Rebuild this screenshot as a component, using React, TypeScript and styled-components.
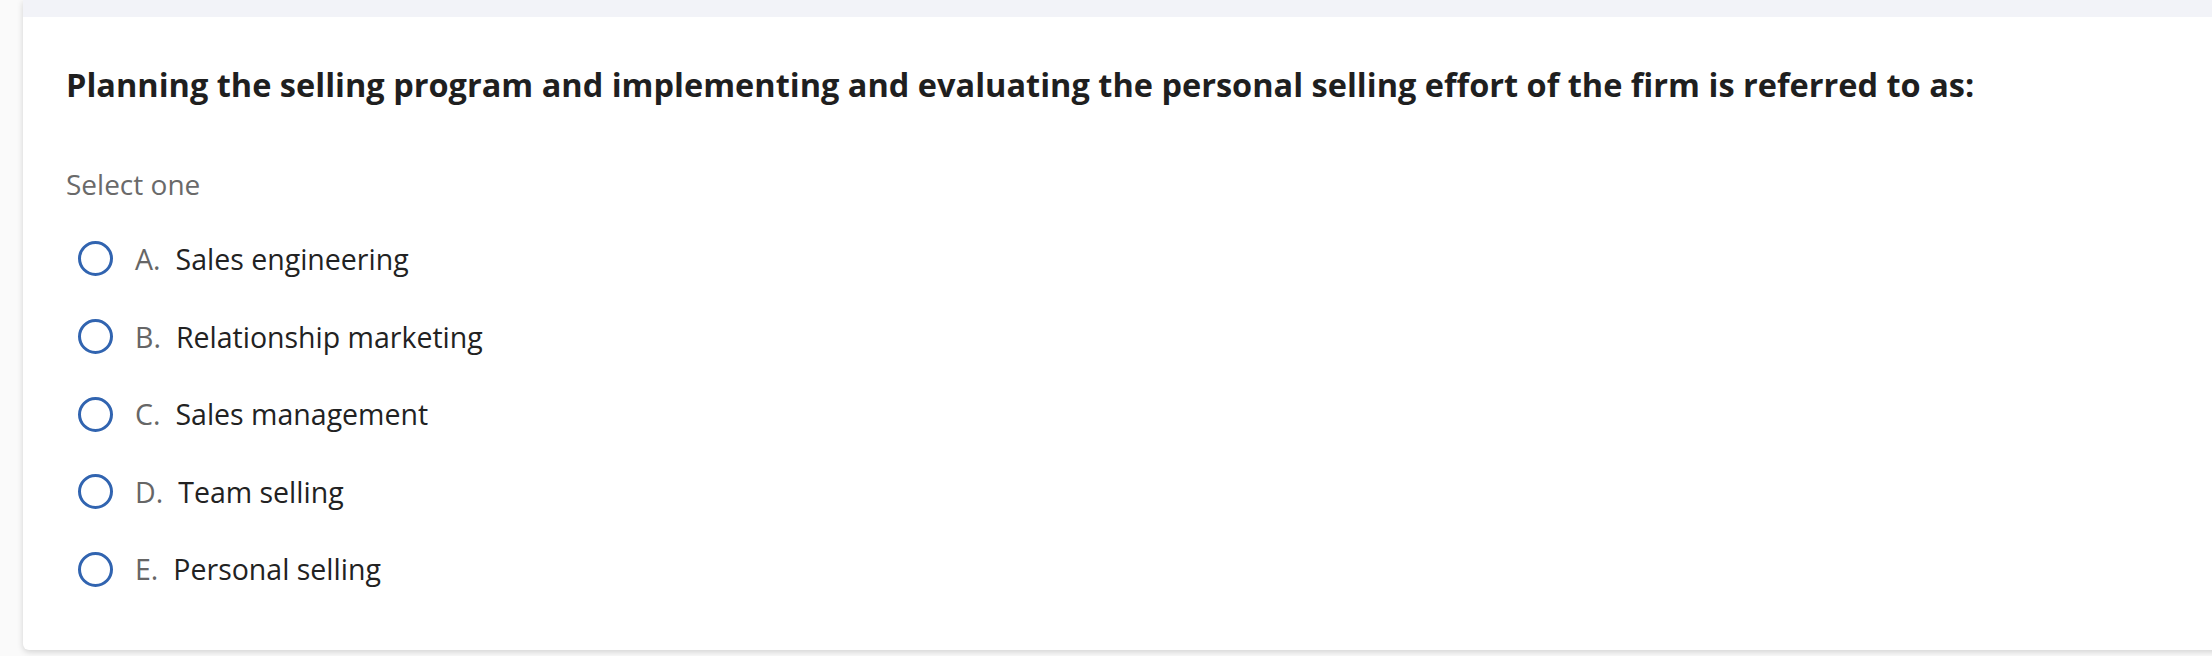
import React from 'react'
import styled, { createGlobalStyle } from 'styled-components'

const GlobalStyle = createGlobalStyle`
  html, body {
    margin: 0;
    padding: 0;
    background: #fafafa;
    font-family: "Open Sans", "Noto Sans", sans-serif;
  }
`

const Page = styled.div`
  height: 656px;
  overflow: hidden;
  padding-left: 23px;
`

const Card = styled.div`
  width: calc(100% + 12px);
  background: #fff;
  border-radius: 0 0 6px 6px;
  box-shadow: 0 2px 6px rgba(0, 0, 0, 0.16);
  padding-bottom: 62.5px;
`

const HeaderStrip = styled.div`
  height: 17px;
  background: #f2f3f8;
`

const Body = styled.div`
  padding: 48.3px 43px 0;
`

const Question = styled.h2`
  margin: 0;
  font-size: 32.5px;
  line-height: 39px;
  font-weight: 700;
  color: #1f1f1f;
`

const Prompt = styled.div`
  margin-top: 63.5px;
  font-size: 28px;
  line-height: 33.6px;
  color: #6a6a6a;
`

const Options = styled.div`
  margin-top: 39.6px;
  display: flex;
  flex-direction: column;
  gap: 41.6px;
`

const Option = styled.label`
  display: flex;
  align-items: center;
  height: 36px;
  cursor: pointer;
`

const Radio = styled.span`
  box-sizing: border-box;
  width: 35px;
  height: 35px;
  margin-left: 12px;
  border: 3.2px solid #3164b0;
  border-radius: 50%;
  flex-shrink: 0;
`

const Letter = styled.span`
  margin-left: 22px;
  margin-right: 15px;
  font-size: 28.5px;
  color: #666;
`

const Text = styled.span`
  font-size: 28.5px;
  color: #222;
`

const choices = [
  { key: 'A', label: 'Sales engineering' },
  { key: 'B', label: 'Relationship marketing' },
  { key: 'C', label: 'Sales management' },
  { key: 'D', label: 'Team selling' },
  { key: 'E', label: 'Personal selling' },
]

const App: React.FC = () => (
  <>
    <GlobalStyle />
    <Page>
      <Card>
        <HeaderStrip />
        <Body>
          <Question>
            Planning the selling program and implementing and evaluating the personal selling effort of the firm is referred to as:
          </Question>
          <Prompt>Select one</Prompt>
          <Options>
            {choices.map((c) => (
              <Option key={c.key}>
                <Radio />
                <Letter>{c.key}.</Letter>
                <Text>{c.label}</Text>
              </Option>
            ))}
          </Options>
        </Body>
      </Card>
    </Page>
  </>
)

export default App
